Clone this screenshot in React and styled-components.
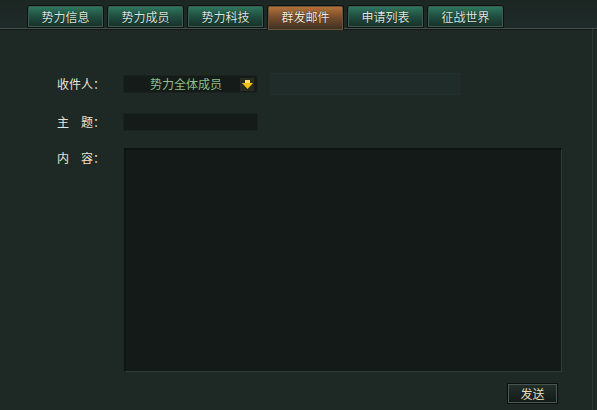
import React from "react";
import styled, { createGlobalStyle } from "styled-components";

const Global = createGlobalStyle`
  html, body { margin: 0; padding: 0; background: #1e2825; }
  #root { width: 597px; height: 410px; }
`;

const Page = styled.div`
  width: 597px;
  height: 410px;
  background: #1e2825;
  font-family: "Noto Sans CJK SC", "Noto Sans", sans-serif;
  font-size: 12px;
  display: flex;
  flex-direction: column;
  overflow: hidden;
  position: relative;
`;

const Header = styled.div`
  height: 28px;
  background: linear-gradient(180deg, #1c2724 0%, #1f2b28 100%);
  border-bottom: 1px solid #46504c;
  box-shadow: 0 1px 0 #121816;
  display: flex;
  align-items: flex-end;
  padding-left: 27px;
  gap: 3px;
`;

const Tab = styled.div`
  width: 77px;
  height: ${(p) => (p.$active ? "25px" : "23px")};
  margin-bottom: ${(p) => (p.$active ? "-2px" : "0")};
  box-sizing: border-box;
  border: 1px solid #0c1210;
  border-bottom: ${(p) => (p.$active ? "none" : "1px solid #0c1210")};
  border-radius: 3px 3px 0 0;
  box-shadow: inset 0 0 0 1px ${(p) => (p.$active ? "#6b5038" : "#3c5a50")};
  background: ${(p) =>
    p.$active
      ? "linear-gradient(180deg, #b8743a 0%, #7a4e2c 45%, #3a2e24 100%)"
      : "linear-gradient(180deg, #2f7a60 0%, #1f4e40 50%, #182e28 100%)"};
  color: ${(p) => (p.$active ? "#f4ecdc" : "#dfe6de")};
  display: flex;
  align-items: center;
  justify-content: center;
  padding-bottom: ${(p) => (p.$active ? "3px" : "0")};
  line-height: 1;
  text-shadow: 0 0 1px #000;
`;

const Body = styled.div`
  flex: 1;
  position: relative;
  border-right: 1px solid #2c3835;
  margin-right: 4px;
  padding: 44px 0 0 57px;
  display: flex;
  flex-direction: column;
`;

const Row = styled.div`
  display: flex;
  align-items: ${(p) => (p.$top ? "flex-start" : "center")};
  margin-bottom: ${(p) => p.$gap || 0}px;
`;

const Label = styled.div`
  width: 66px;
  color: #ece4d4;
  white-space: pre;
  padding-top: ${(p) => p.$pt || 0}px;
  line-height: 14px;
`;

const Select = styled.div`
  width: 135px;
  height: 18px;
  box-sizing: border-box;
  background: #141b18;
  border: 1px solid #1a2320;
  display: flex;
  align-items: center;
`;

const SelectText = styled.div`
  flex: 1;
  text-align: center;
  color: #8fbf8a;
  padding-left: 8px;
  line-height: 1;
`;

const ArrowBox = styled.div`
  width: 14px;
  height: 13px;
  margin-right: 3px;
  background: #2a2c22;
  display: flex;
  align-items: center;
  justify-content: center;
`;

const Ghost = styled.div`
  width: 190px;
  height: 22px;
  margin-left: 12px;
  box-sizing: border-box;
  border: 1px solid #232f2c;
  background: #202c29;
`;

const Input = styled.div`
  width: 135px;
  height: 18px;
  box-sizing: border-box;
  background: #141b18;
  border: 1px solid #1a2320;
`;

const TextArea = styled.div`
  width: 438px;
  height: 224px;
  box-sizing: border-box;
  background: #131a17;
  border-top: 2px solid #0e1412;
  border-left: 2px solid #0e1412;
  border-right: 1px solid #2e3a37;
  border-bottom: 1px solid #2e3a37;
  margin-left: 1px;
`;

const Footer = styled.div`
  display: flex;
  justify-content: flex-end;
  padding-right: 34px;
  margin-top: 11px;
`;

const SendButton = styled.div`
  width: 51px;
  height: 21px;
  box-sizing: border-box;
  border: 1px solid #0a0f0d;
  box-shadow: inset 0 0 0 1px #4a5652;
  background: linear-gradient(180deg, #24302c 0%, #121a17 100%);
  color: #e6ddb8;
  display: flex;
  align-items: center;
  justify-content: center;
  line-height: 1;
`;

const tabs = ["势力信息", "势力成员", "势力科技", "群发邮件", "申请列表", "征战世界"];

export default function App() {
  return (
    <Page>
      <Global />
      <Header>
        {tabs.map((t, i) => (
          <Tab key={t} $active={i === 3}>
            {t}
          </Tab>
        ))}
      </Header>
      <Body>
        <Row $gap={18}>
          <Label>收件人：</Label>
          <Select>
            <SelectText>势力全体成员</SelectText>
            <ArrowBox>
              <svg width="11" height="9" viewBox="0 0 11 9">
                <path d="M3 0 H8 V3 H11 L5.5 9 L0 3 H3 Z" fill="#f2c21a" />
                <path d="M3 0 H8 V3 H3 Z" fill="#fbe36a" />
              </svg>
            </ArrowBox>
          </Select>
          <Ghost />
        </Row>
        <Row $gap={17}>
          <Label>{"主　题："}</Label>
          <Input />
        </Row>
        <Row $top>
          <Label $pt={3}>{"内　容："}</Label>
          <TextArea />
        </Row>
        <Footer>
          <SendButton>发送</SendButton>
        </Footer>
      </Body>
    </Page>
  );
}
